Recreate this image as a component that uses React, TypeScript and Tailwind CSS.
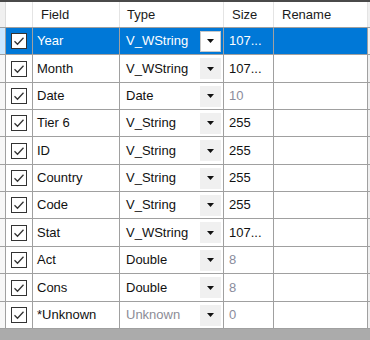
import React from 'react';

type Row = {
  field: string;
  type: string;
  size: string;
  typeMuted?: boolean;
  sizeMuted?: boolean;
  selected?: boolean;
  h: string;
};

const rows: Row[] = [
  { field: 'Year', type: 'V_WString', size: '107...', selected: true, h: 'h-[27px]' },
  { field: 'Month', type: 'V_WString', size: '107...', h: 'h-[28px]' },
  { field: 'Date', type: 'Date', size: '10', sizeMuted: true, h: 'h-[27px]' },
  { field: 'Tier 6', type: 'V_String', size: '255', h: 'h-[27px]' },
  { field: 'ID', type: 'V_String', size: '255', h: 'h-[28px]' },
  { field: 'Country', type: 'V_String', size: '255', h: 'h-[27px]' },
  { field: 'Code', type: 'V_String', size: '255', h: 'h-[27px]' },
  { field: 'Stat', type: 'V_WString', size: '107...', h: 'h-[28px]' },
  { field: 'Act', type: 'Double', size: '8', sizeMuted: true, h: 'h-[27px]' },
  { field: 'Cons', type: 'Double', size: '8', sizeMuted: true, h: 'h-[28px]' },
  { field: '*Unknown', type: 'Unknown', size: '0', typeMuted: true, sizeMuted: true, h: 'h-[27px]' },
];

const Check = () => (
  <div className="flex h-[16px] w-[16px] items-center justify-center border border-[#333] bg-white">
    <svg width="12" height="12" viewBox="0 0 12 12">
      <path d="M1.5 6.2 L4.5 9.2 L10.5 2.8" fill="none" stroke="#333" strokeWidth="1.3" />
    </svg>
  </div>
);

const DropButton = ({ selected }: { selected?: boolean }) => (
  <div
    className={
      selected
        ? 'flex h-[21px] w-[21px] items-center justify-center border border-[#c8c8c8] bg-white'
        : 'flex h-[21px] w-[21px] items-center justify-center bg-[#f0f0f0]'
    }
  >
    <svg width="7" height="4" viewBox="0 0 7 4">
      <path d="M0 0 L7 0 L3.5 4 Z" fill="#111" />
    </svg>
  </div>
);

export default function App() {
  return (
    <div
      className="flex h-[340px] w-[370px] flex-col bg-[#ababab] text-[13px]"
      style={{ fontFamily: '"Liberation Sans", Arial, sans-serif' }}
    >
      <div className="h-[2px] bg-[#4a4a4a]" />
      <div className="flex h-[26px] border-b border-[#a0a0a0] bg-white text-[#1a1a1a]">
        <div className="w-[6px] border-r border-[#dcdcdc] bg-[#f0f0f0]" />
        <div className="w-[27px] border-r border-[#e4e4e4]" />
        <div className="flex w-[87px] items-center border-r border-[#e4e4e4] pl-[8px]">Field</div>
        <div className="flex w-[104px] items-center border-r border-[#e4e4e4] pl-[7px]">Type</div>
        <div className="flex w-[50px] items-center border-r border-[#e4e4e4] pl-[8px]">Size</div>
        <div className="flex w-[94px] items-center border-r border-[#e4e4e4] pl-[8px]">Rename</div>
        <div className="flex-1 bg-[#f0f0f0]" />
      </div>
      {rows.map((r) => {
        const sel = r.selected;
        const text = sel ? 'text-white' : 'text-[#111]';
        return (
          <div key={r.field} className={`flex ${r.h} border-b border-[#a0a0a0] bg-white`}>
            <div
              className={
                sel ? 'w-[6px] border-r border-[#a0a0a0] bg-[#cce8ff]' : 'w-[6px] border-r border-[#a0a0a0] bg-[#f7f7f7]'
              }
            />
            <div
              className={
                sel
                  ? 'flex w-[27px] items-center justify-center border-r border-[#a0a0a0] bg-[#0078d7]'
                  : 'flex w-[27px] items-center justify-center border-r border-[#a0a0a0]'
              }
            >
              <Check />
            </div>
            <div
              className={`flex w-[87px] items-center border-r border-[#a0a0a0] pl-[4px] ${
                sel ? 'bg-[#0078d7]' : ''
              } ${text}`}
            >
              {r.field}
            </div>
            <div
              className={`flex w-[104px] items-center justify-between border-r border-[#a0a0a0] pl-[6px] pr-[2px] ${
                sel ? 'bg-[#0078d7]' : ''
              }`}
            >
              <span className={sel ? 'text-white' : r.typeMuted ? 'text-[#8c8c96]' : 'text-[#111]'}>{r.type}</span>
              <DropButton selected={sel} />
            </div>
            <div
              className={`flex w-[50px] items-center border-r border-[#a0a0a0] pl-[5px] ${sel ? 'bg-[#0078d7]' : ''}`}
            >
              <span className={sel ? 'text-white' : r.sizeMuted ? 'text-[#8a8c9c]' : 'text-[#111]'}>{r.size}</span>
            </div>
            <div className={`w-[94px] border-r border-[#a0a0a0] ${sel ? 'bg-[#0078d7]' : ''}`} />
            <div className="flex-1 bg-[#f0f0f0]" />
          </div>
        );
      })}
    </div>
  );
}
